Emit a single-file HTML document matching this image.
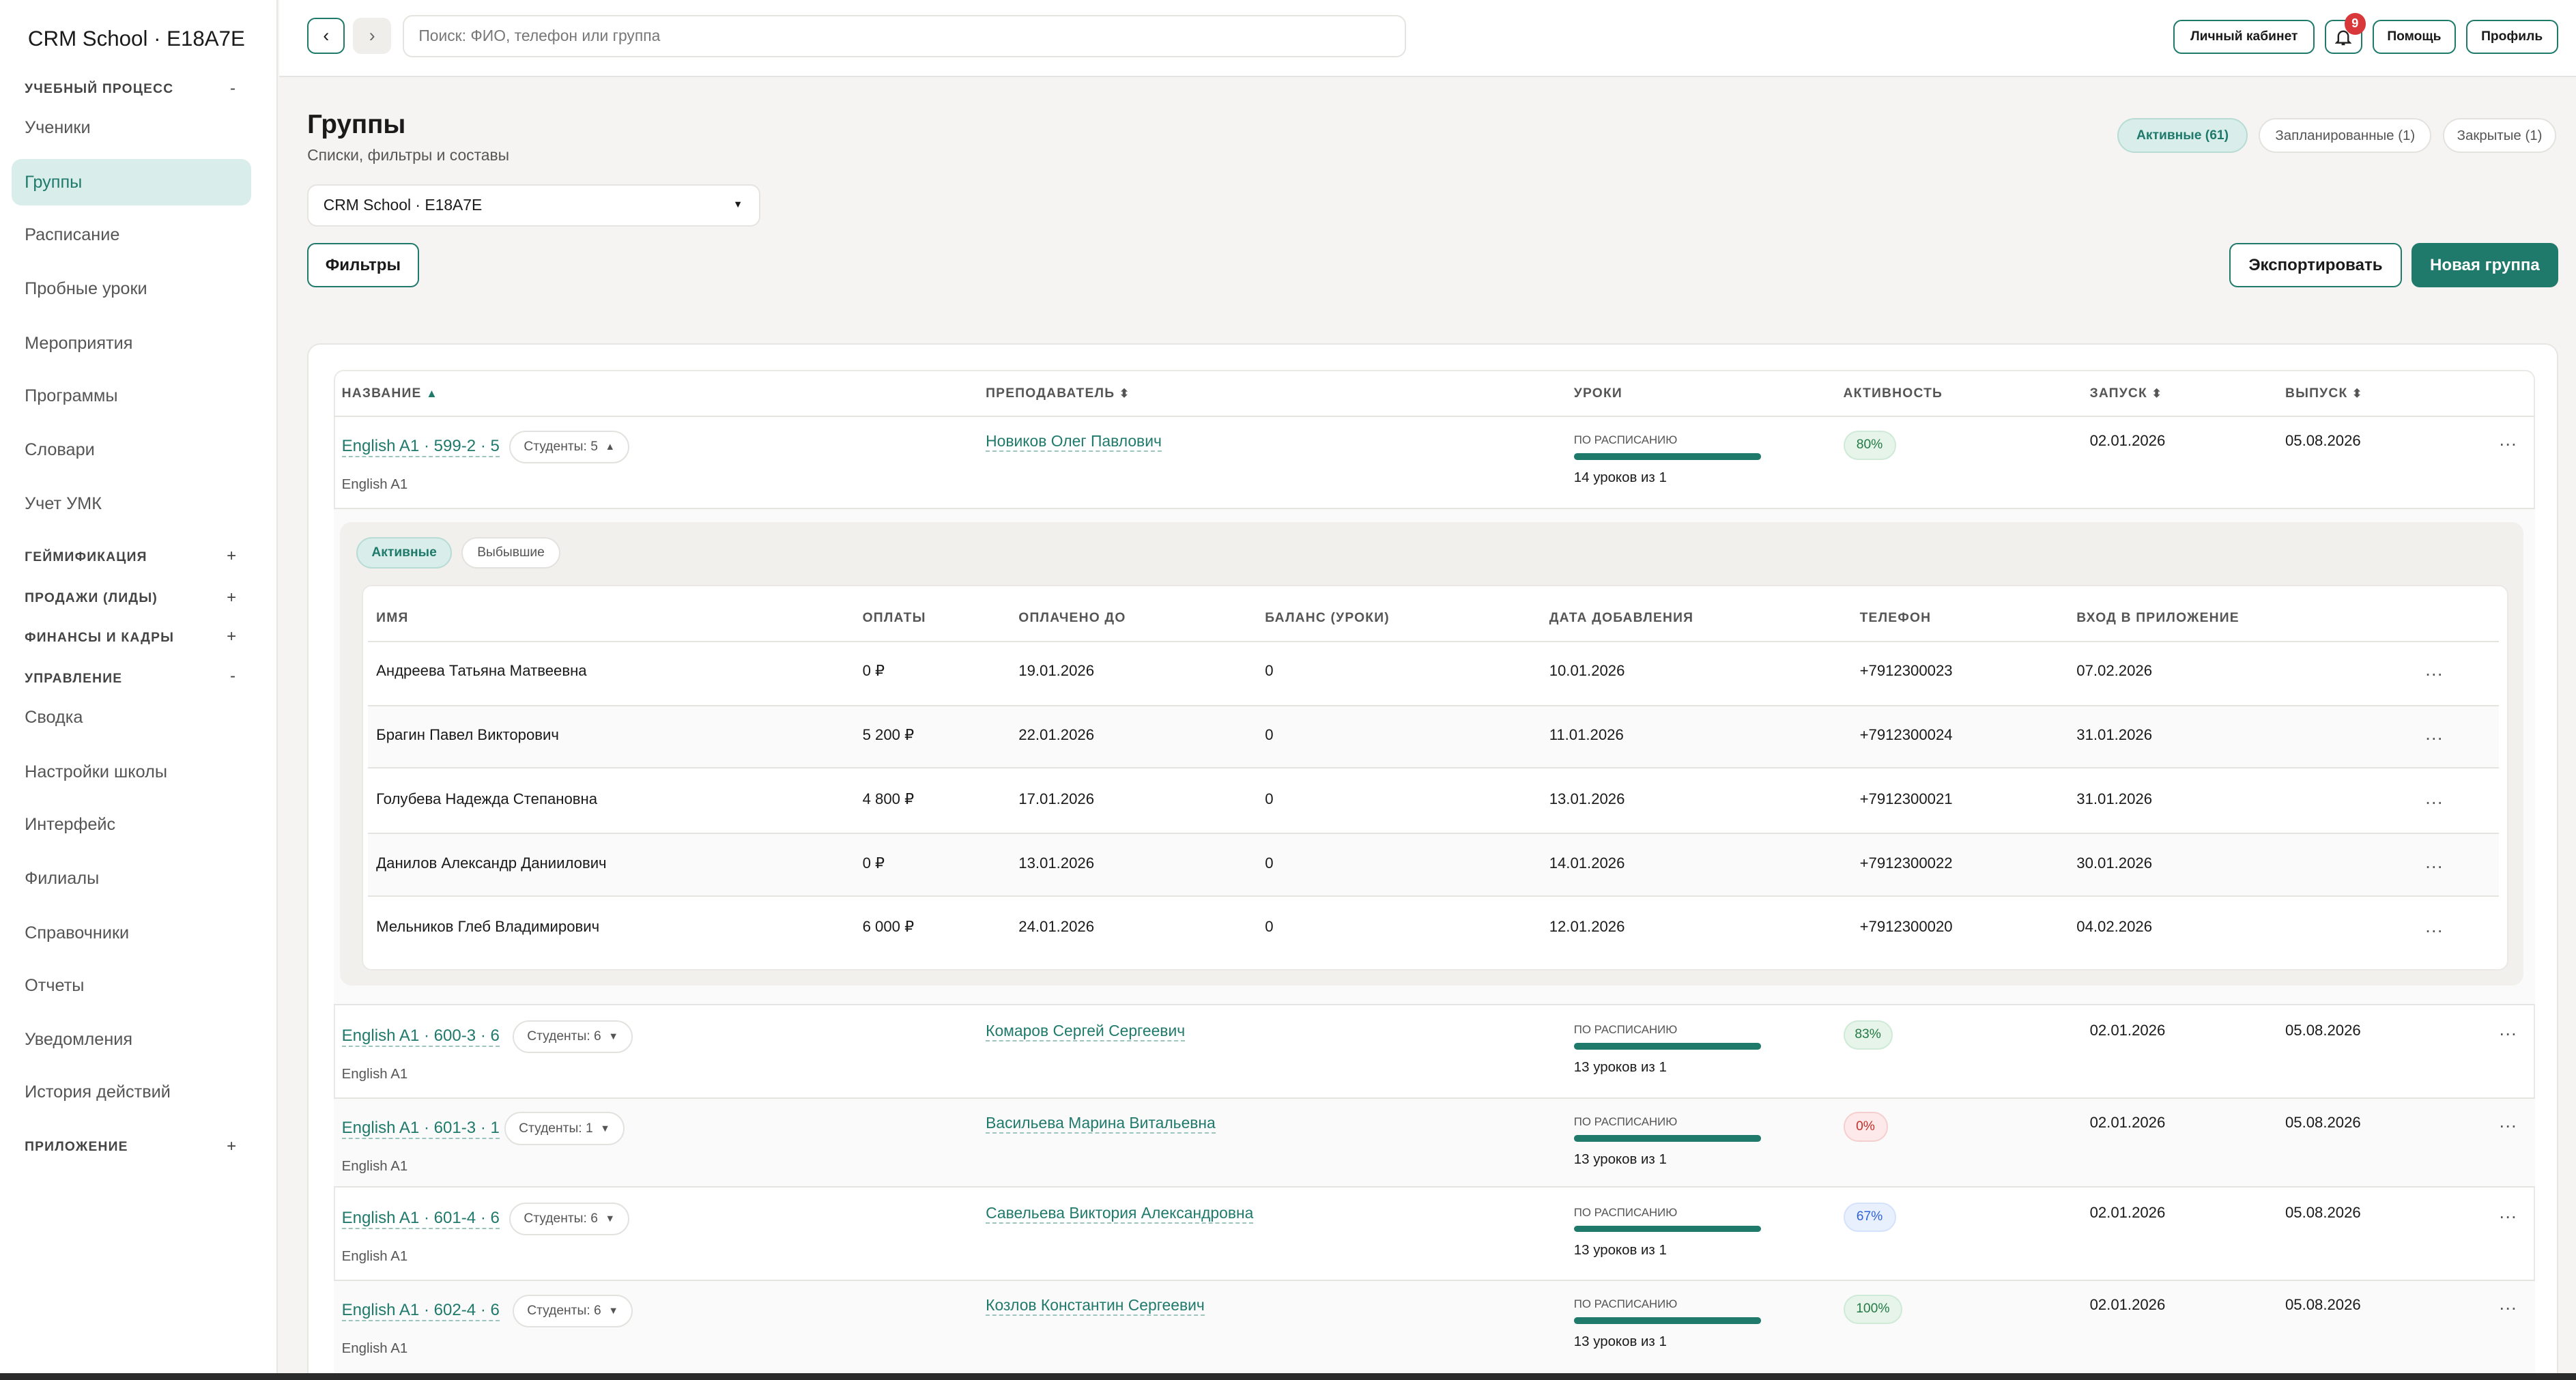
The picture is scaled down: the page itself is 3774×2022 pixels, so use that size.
<!DOCTYPE html>
<html><head><meta charset="utf-8"><style>
*{box-sizing:border-box;margin:0;padding:0}
html,body{width:3774px;height:2022px;overflow:hidden;background:#2b2b2b}
#w{position:absolute;left:0;top:0;width:1568px;height:840px;overflow:hidden;zoom:2.40689;font-family:"Liberation Sans",sans-serif;color:#1a1a1a;background:#f5f4f2;font-size:10px}
.a{position:absolute;white-space:nowrap}
.sb{left:0;top:0;width:169px;height:840px;background:#fff;border-right:1px solid #e8e6e2}
.sec{font-size:8px;letter-spacing:.5px;color:#444;font-weight:bold}
.it{font-size:10.5px;color:#555}
.btn{border:1px solid #1f7a6c;border-radius:5px;background:#fff;font-weight:bold;display:flex;align-items:center;justify-content:center;font-size:9.5px}
.pill{border:1px solid #e4e2de;border-radius:12px;background:#fff;display:flex;align-items:center;justify-content:center;font-size:8.5px;color:#555}
.th{font-size:8px;letter-spacing:.5px;color:#555;font-weight:bold}
.lk{color:#1f7a6c;border-bottom:1px dashed #9cc5bd;font-size:10px}
.st{border:1px solid #e4e2de;border-radius:10px;background:#fff;font-size:8px;color:#555;padding:0 8px;height:20px;display:flex;align-items:center}
.bar{width:114px;height:4px;border-radius:2px;background:#1f7a6c}
.bd{border-radius:9px;height:18px;display:flex;align-items:center;justify-content:center;font-size:8px}
.dots{font-size:11px;color:#555;letter-spacing:0}
.td{font-size:9.2px}
</style></head><body><div id="w">
<div class="a sb"></div>
<div class="a" style="left:17px;top:16px;font-size:13px">CRM School · E18A7E</div>
<div class="a sec" style="left:15px;top:50px">УЧЕБНЫЙ ПРОЦЕСС</div><div class="a" style="left:140px;top:48px;color:#444">-</div>
<div class="a it" style="left:15px;top:72px">Ученики</div>
<div class="a" style="left:7px;top:97px;width:146px;height:28px;background:#d9eeea;border-radius:6px"></div>
<div class="a it" style="left:15px;top:105px;color:#1f7a6c">Группы</div>
<div class="a it" style="left:15px;top:137px">Расписание</div>
<div class="a it" style="left:15px;top:170px">Пробные уроки</div>
<div class="a it" style="left:15px;top:203px">Мероприятия</div>
<div class="a it" style="left:15px;top:235px">Программы</div>
<div class="a it" style="left:15px;top:268px">Словари</div>
<div class="a it" style="left:15px;top:301px">Учет УМК</div>
<div class="a sec" style="left:15px;top:335px">ГЕЙМИФИКАЦИЯ</div><div class="a" style="left:138px;top:333px;color:#444">+</div>
<div class="a sec" style="left:15px;top:360px">ПРОДАЖИ (ЛИДЫ)</div><div class="a" style="left:138px;top:358px;color:#444">+</div>
<div class="a sec" style="left:15px;top:384px">ФИНАНСЫ И КАДРЫ</div><div class="a" style="left:138px;top:382px;color:#444">+</div>
<div class="a sec" style="left:15px;top:409px">УПРАВЛЕНИЕ</div><div class="a" style="left:140px;top:406px;color:#444">-</div>
<div class="a it" style="left:15px;top:431px">Сводка</div>
<div class="a it" style="left:15px;top:464px">Настройки школы</div>
<div class="a it" style="left:15px;top:496px">Интерфейс</div>
<div class="a it" style="left:15px;top:529px">Филиалы</div>
<div class="a it" style="left:15px;top:562px">Справочники</div>
<div class="a it" style="left:15px;top:594px">Отчеты</div>
<div class="a it" style="left:15px;top:627px">Уведомления</div>
<div class="a it" style="left:15px;top:659px">История действий</div>
<div class="a sec" style="left:15px;top:694px">ПРИЛОЖЕНИЕ</div><div class="a" style="left:138px;top:692px;color:#444">+</div>

<div class="a" style="left:170px;top:0;width:1398px;height:47px;background:#fff;border-bottom:1px solid #e6e4e0"></div>
<div class="a btn" style="left:187px;top:11px;width:23px;height:22px;font-weight:normal;font-size:11px">‹</div>
<div class="a" style="left:215px;top:11px;width:23px;height:22px;border-radius:5px;background:#efeeeb;display:flex;align-items:center;justify-content:center;color:#666;font-size:11px">›</div>
<div class="a" style="left:245px;top:9px;width:611px;height:26px;border:1px solid #e6e4e0;border-radius:6px;background:#fff;padding-left:9px;line-height:24px;color:#777;font-size:9.5px">Поиск: ФИО, телефон или группа</div>
<div class="a btn" style="left:1323px;top:12px;width:86px;height:21px;font-size:8px">Личный кабинет</div>
<div class="a btn" style="left:1415px;top:12px;width:23px;height:21px"><svg width="10" height="11" viewBox="0 0 10 11"><path d="M2 8V5a3 3 0 016 0v3l1 1H1z M4 10h2" fill="none" stroke="#222" stroke-width="1"/></svg></div>
<div class="a" style="left:1427px;top:8px;width:13px;height:13px;border-radius:7px;background:#d9383a;color:#fff;font-size:7.5px;font-weight:bold;text-align:center;line-height:13px">9</div>
<div class="a btn" style="left:1444px;top:12px;width:51px;height:21px;font-size:8px">Помощь</div>
<div class="a btn" style="left:1501px;top:12px;width:56px;height:21px;font-size:8px">Профиль</div>

<div class="a" style="left:187px;top:67px;font-size:16px;font-weight:bold">Группы</div>
<div class="a" style="left:187px;top:89px;font-size:9.5px;color:#555">Списки, фильтры и составы</div>
<div class="a pill" style="left:1289px;top:72px;width:79px;height:21px;background:#d9eeea;border-color:#b8dcd4;color:#1f7a6c;font-weight:bold;font-size:8px">Активные (61)</div>
<div class="a pill" style="left:1375px;top:72px;width:105px;height:21px">Запланированные (1)</div>
<div class="a pill" style="left:1487px;top:72px;width:69px;height:21px">Закрытые (1)</div>
<div class="a" style="left:187px;top:112px;width:276px;height:26px;background:#fff;border:1px solid #e6e4e0;border-radius:6px;padding-left:9px;line-height:24px;font-size:9.5px">CRM School · E18A7E<span style="position:absolute;right:10px;font-size:6px">▼</span></div>
<div class="a btn" style="left:187px;top:148px;width:68px;height:27px;font-size:10px">Фильтры</div>
<div class="a btn" style="left:1357px;top:148px;width:105px;height:27px;font-size:10px">Экспортировать</div>
<div class="a btn" style="left:1468px;top:148px;width:89px;height:27px;font-size:10px;background:#1f7a6c;color:#fff">Новая группа</div>

<div class="a" style="left:187px;top:209px;width:1370px;height:640px;background:#fff;border:1px solid #e8e6e2;border-radius:8px"></div>
<div class="a" style="left:203px;top:225px;width:1340px;height:620px;border:1px solid #ebe9e5;border-radius:6px;background:#fff"></div>
<div class="a th" style="left:208px;top:235px">НАЗВАНИЕ <span style="color:#1f7a6c;font-size:7px">▲</span></div>
<div class="a th" style="left:600px;top:235px">ПРЕПОДАВАТЕЛЬ <span style="font-size:7px">⬍</span></div>
<div class="a th" style="left:958px;top:235px">УРОКИ</div>
<div class="a th" style="left:1122px;top:235px">АКТИВНОСТЬ</div>
<div class="a th" style="left:1272px;top:235px">ЗАПУСК <span style="font-size:7px">⬍</span></div>
<div class="a th" style="left:1391px;top:235px">ВЫПУСК <span style="font-size:7px">⬍</span></div>
<div class="a" style="left:203px;top:253px;width:1340px;height:1px;background:#e6e4e0"></div>

<div class="a lk" style="left:208px;top:266px">English A1 · 599-2 · 5</div>
<div class="a st" style="left:310px;top:262px">Студенты: 5 &nbsp;<span style="font-size:6px">▲</span></div>
<div class="a" style="left:208px;top:290px;font-size:8.5px;color:#555">English A1</div>
<div class="a lk" style="left:600px;top:263px;font-size:9.5px">Новиков Олег Павлович</div>
<div class="a" style="left:958px;top:264px;font-size:7px;color:#555">ПО РАСПИСАНИЮ</div>
<div class="a bar" style="left:958px;top:276px"></div>
<div class="a" style="left:958px;top:286px;font-size:8.5px">14 уроков из 1</div>
<div class="a bd" style="left:1122px;top:262px;width:32px;background:#e6f4ea;border:1px solid #d0ead8;color:#237a45">80%</div>
<div class="a td" style="left:1272px;top:263px">02.01.2026</div>
<div class="a td" style="left:1391px;top:263px">05.08.2026</div>
<div class="a dots" style="left:1521px;top:264px">···</div>
<div class="a" style="left:203px;top:309px;width:1340px;height:303px;background:#fafafa;border-top:1px solid #e6e4e0;border-bottom:1px solid #e6e4e0"></div>
<div class="a" style="left:207px;top:318px;width:1329px;height:282px;background:#f1f0ed;border-radius:7px"></div>
<div class="a pill" style="left:217px;top:327px;width:58px;height:19px;background:#d9eeea;border-color:#b8dcd4;color:#1f7a6c;font-weight:bold;font-size:8px">Активные</div>
<div class="a pill" style="left:281px;top:327px;width:60px;height:19px;font-size:8px">Выбывшие</div>
<div class="a" style="left:220px;top:356px;width:1307px;height:235px;background:#fff;border-radius:6px;border:1px solid #ebe9e5"></div>
<div class="a th" style="left:229px;top:372px">ИМЯ</div>
<div class="a th" style="left:525px;top:372px">ОПЛАТЫ</div>
<div class="a th" style="left:620px;top:372px">ОПЛАЧЕНО ДО</div>
<div class="a th" style="left:770px;top:372px">БАЛАНС (УРОКИ)</div>
<div class="a th" style="left:943px;top:372px">ДАТА ДОБАВЛЕНИЯ</div>
<div class="a th" style="left:1132px;top:372px">ТЕЛЕФОН</div>
<div class="a th" style="left:1264px;top:372px">ВХОД В ПРИЛОЖЕНИЕ</div>
<div class="a" style="left:224px;top:390px;width:1297px;height:1px;background:#e6e4e0"></div>
<div class="a" style="left:224px;top:429px;width:1297px;height:39px;background:#fafafa;border-top:1px solid #e6e4e0;border-bottom:1px solid #e6e4e0"></div>
<div class="a" style="left:224px;top:507px;width:1297px;height:39px;background:#fafafa;border-top:1px solid #e6e4e0;border-bottom:1px solid #e6e4e0"></div>

<div class="a td" style="left:229px;top:403px">Андреева Татьяна Матвеевна</div><div class="a td" style="left:525px;top:403px">0 ₽</div><div class="a td" style="left:620px;top:403px">19.01.2026</div><div class="a td" style="left:770px;top:403px">0</div><div class="a td" style="left:943px;top:403px">10.01.2026</div><div class="a td" style="left:1132px;top:403px">+7912300023</div><div class="a td" style="left:1264px;top:403px">07.02.2026</div><div class="a dots" style="left:1476px;top:404px">···</div>
<div class="a td" style="left:229px;top:442px">Брагин Павел Викторович</div><div class="a td" style="left:525px;top:442px">5 200 ₽</div><div class="a td" style="left:620px;top:442px">22.01.2026</div><div class="a td" style="left:770px;top:442px">0</div><div class="a td" style="left:943px;top:442px">11.01.2026</div><div class="a td" style="left:1132px;top:442px">+7912300024</div><div class="a td" style="left:1264px;top:442px">31.01.2026</div><div class="a dots" style="left:1476px;top:443px">···</div>
<div class="a td" style="left:229px;top:481px">Голубева Надежда Степановна</div><div class="a td" style="left:525px;top:481px">4 800 ₽</div><div class="a td" style="left:620px;top:481px">17.01.2026</div><div class="a td" style="left:770px;top:481px">0</div><div class="a td" style="left:943px;top:481px">13.01.2026</div><div class="a td" style="left:1132px;top:481px">+7912300021</div><div class="a td" style="left:1264px;top:481px">31.01.2026</div><div class="a dots" style="left:1476px;top:482px">···</div>
<div class="a td" style="left:229px;top:520px">Данилов Александр Даниилович</div><div class="a td" style="left:525px;top:520px">0 ₽</div><div class="a td" style="left:620px;top:520px">13.01.2026</div><div class="a td" style="left:770px;top:520px">0</div><div class="a td" style="left:943px;top:520px">14.01.2026</div><div class="a td" style="left:1132px;top:520px">+7912300022</div><div class="a td" style="left:1264px;top:520px">30.01.2026</div><div class="a dots" style="left:1476px;top:521px">···</div>
<div class="a td" style="left:229px;top:559px">Мельников Глеб Владимирович</div><div class="a td" style="left:525px;top:559px">6 000 ₽</div><div class="a td" style="left:620px;top:559px">24.01.2026</div><div class="a td" style="left:770px;top:559px">0</div><div class="a td" style="left:943px;top:559px">12.01.2026</div><div class="a td" style="left:1132px;top:559px">+7912300020</div><div class="a td" style="left:1264px;top:559px">04.02.2026</div><div class="a dots" style="left:1476px;top:560px">···</div>

<div class="a" style="left:203px;top:668px;width:1340px;height:55px;background:#fafafa;border-top:1px solid #e6e4e0;border-bottom:1px solid #e6e4e0"></div>
<div class="a" style="left:203px;top:779px;width:1340px;height:60px;background:#fafafa;border-top:1px solid #e6e4e0"></div>

<div class="a lk" style="left:208px;top:625px">English A1 · 600-3 · 6</div><div class="a st" style="left:312px;top:621px">Студенты: 6 &nbsp;<span style="font-size:6px">▼</span></div><div class="a" style="left:208px;top:649px;font-size:8.5px;color:#555">English A1</div>
<div class="a lk" style="left:600px;top:622px;font-size:9.5px">Комаров Сергей Сергеевич</div>
<div class="a" style="left:958px;top:623px;font-size:7px;color:#555">ПО РАСПИСАНИЮ</div><div class="a bar" style="left:958px;top:635px"></div><div class="a" style="left:958px;top:645px;font-size:8.5px">13 уроков из 1</div>
<div class="a bd" style="left:1122px;top:621px;width:30px;background:#e6f4ea;border:1px solid #d0ead8;color:#237a45">83%</div>
<div class="a td" style="left:1272px;top:622px">02.01.2026</div><div class="a td" style="left:1391px;top:622px">05.08.2026</div><div class="a dots" style="left:1521px;top:623px">···</div>

<div class="a lk" style="left:208px;top:681px">English A1 · 601-3 · 1</div><div class="a st" style="left:307px;top:677px">Студенты: 1 &nbsp;<span style="font-size:6px">▼</span></div><div class="a" style="left:208px;top:705px;font-size:8.5px;color:#555">English A1</div>
<div class="a lk" style="left:600px;top:678px;font-size:9.5px">Васильева Марина Витальевна</div>
<div class="a" style="left:958px;top:679px;font-size:7px;color:#555">ПО РАСПИСАНИЮ</div><div class="a bar" style="left:958px;top:691px"></div><div class="a" style="left:958px;top:701px;font-size:8.5px">13 уроков из 1</div>
<div class="a bd" style="left:1122px;top:677px;width:27px;background:#fde9e9;border:1px solid #f5cfcf;color:#c0302c">0%</div>
<div class="a td" style="left:1272px;top:678px">02.01.2026</div><div class="a td" style="left:1391px;top:678px">05.08.2026</div><div class="a dots" style="left:1521px;top:679px">···</div>

<div class="a lk" style="left:208px;top:736px">English A1 · 601-4 · 6</div><div class="a st" style="left:310px;top:732px">Студенты: 6 &nbsp;<span style="font-size:6px">▼</span></div><div class="a" style="left:208px;top:760px;font-size:8.5px;color:#555">English A1</div>
<div class="a lk" style="left:600px;top:733px;font-size:9.5px">Савельева Виктория Александровна</div>
<div class="a" style="left:958px;top:734px;font-size:7px;color:#555">ПО РАСПИСАНИЮ</div><div class="a bar" style="left:958px;top:746px"></div><div class="a" style="left:958px;top:756px;font-size:8.5px">13 уроков из 1</div>
<div class="a bd" style="left:1122px;top:732px;width:32px;background:#e8f0fe;border:1px solid #d4e2fc;color:#2f63d8">67%</div>
<div class="a td" style="left:1272px;top:733px">02.01.2026</div><div class="a td" style="left:1391px;top:733px">05.08.2026</div><div class="a dots" style="left:1521px;top:734px">···</div>

<div class="a lk" style="left:208px;top:792px">English A1 · 602-4 · 6</div><div class="a st" style="left:312px;top:788px">Студенты: 6 &nbsp;<span style="font-size:6px">▼</span></div><div class="a" style="left:208px;top:816px;font-size:8.5px;color:#555">English A1</div>
<div class="a lk" style="left:600px;top:789px;font-size:9.5px">Козлов Константин Сергеевич</div>
<div class="a" style="left:958px;top:790px;font-size:7px;color:#555">ПО РАСПИСАНИЮ</div><div class="a bar" style="left:958px;top:802px"></div><div class="a" style="left:958px;top:812px;font-size:8.5px">13 уроков из 1</div>
<div class="a bd" style="left:1122px;top:788px;width:36px;background:#e6f4ea;border:1px solid #d0ead8;color:#237a45">100%</div>
<div class="a td" style="left:1272px;top:789px">02.01.2026</div><div class="a td" style="left:1391px;top:789px">05.08.2026</div><div class="a dots" style="left:1521px;top:790px">···</div>

<div class="a" style="left:0;top:836px;width:1568px;height:10px;background:#2b2b2b"></div>
</div></body></html>
